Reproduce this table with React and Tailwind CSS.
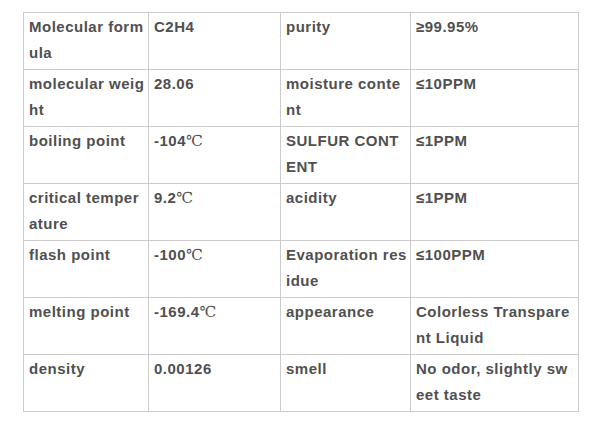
import React from "react";

const C = () => (
  <span className="font-normal tracking-normal [font-family:'DejaVu_Serif',serif]">℃</span>
);

const rows = [
  ["Molecular formula", "C2H4", "purity", "≥99.95%"],
  ["molecular weight", "28.06", "moisture content", "≤10PPM"],
  ["boiling point", <>-104<C /></>, "SULFUR CONTENT", "≤1PPM"],
  ["critical temperature", <>9.2<C /></>, "acidity", "≤1PPM"],
  ["flash point", <>-100<C /></>, "Evaporation residue", "≤100PPM"],
  ["melting point", <>-169.4<C /></>, "appearance", "Colorless Transparent Liquid"],
  ["density", "0.00126", "smell", "No odor, slightly sweet taste"],
];

export default function App() {
  return (
    <div className="w-[593px] h-[427px] bg-white pt-[12px] pl-[23px]">
      <table className="border-collapse table-fixed w-[555px] [font-family:'Liberation_Sans',Arial,sans-serif] text-[15px] font-bold text-[#505050] tracking-[0.5px] leading-[26px]">
        <colgroup>
          <col className="w-[125px]" />
          <col className="w-[132px]" />
          <col className="w-[130px]" />
          <col className="w-[168px]" />
        </colgroup>
        <tbody>
          {rows.map((r, i) => (
            <tr key={i} className="h-[57px]">
              {r.map((c, j) => (
                <td
                  key={j}
                  className={
                    "border border-[#cccccc] align-top pl-[5px] pt-[1px] pb-0 break-all " +
                    (j === 3 ? "pr-[4px]" : "pr-[2px]")
                  }
                >
                  {c}
                </td>
              ))}
            </tr>
          ))}
        </tbody>
      </table>
    </div>
  );
}
